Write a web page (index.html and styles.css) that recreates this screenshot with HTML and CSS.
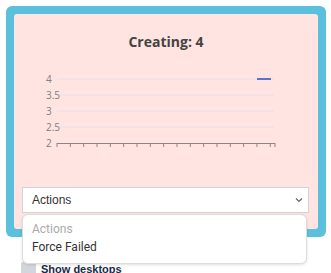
FILE: index.html
```html
<!DOCTYPE html>
<html lang="en">
<head>
    <meta charset="UTF-8">
    <meta name="viewport" content="width=device-width, initial-scale=1.0">
    <title>Creating</title>
    <link rel="stylesheet" href="styles.css">
</head>
<body>
    <div class="card">
        <div class="panel">
            <h2 class="title">Creating: 4</h2>
            <svg class="chart" width="304" height="100" viewBox="0 0 304 100">
                <g class="grid">
                    <line x1="43" y1="27" x2="260" y2="27"/>
                    <line x1="43" y1="43" x2="260" y2="43"/>
                    <line x1="43" y1="59" x2="260" y2="59"/>
                    <line x1="43" y1="75" x2="260" y2="75"/>
                </g>
                <g class="labels">
                    <text x="32" y="31">4</text>
                    <text x="32" y="47">3.5</text>
                    <text x="32" y="63">3</text>
                    <text x="32" y="79">2.5</text>
                    <text x="32" y="95">2</text>
                </g>
                <g class="axis" id="axis">
                    <line x1="43" y1="91.5" x2="261" y2="91.5"/>
                </g>
                <line class="series" x1="243" y1="27" x2="257" y2="27"/>
            </svg>
            <div class="select-wrap">
                <div class="select">
                    <span>Actions</span>
                    <svg width="8" height="6" viewBox="0 0 8 6"><path d="M1 1.5 L4 4.5 L7 1.5" fill="none" stroke="#666" stroke-width="1.2"/></svg>
                </div>
                <div class="menu">
                    <div class="item muted">Actions</div>
                    <div class="item">Force Failed</div>
                </div>
            </div>
        </div>
    </div>
    <label class="check">
        <span class="box"></span>
        <span>Show desktops</span>
    </label>

    <script>
        // x axis ticks
        const axis = document.getElementById('axis');
        const xs = [];
        for (let k = 0; k <= 16; k++) xs.push(43 + k * 13.33);
        xs.push(261);
        xs.forEach(function(x) {
            const t = document.createElementNS('http://www.w3.org/2000/svg', 'line');
            t.setAttribute('x1', x);
            t.setAttribute('x2', x);
            t.setAttribute('y1', 91);
            t.setAttribute('y2', 95);
            axis.appendChild(t);
        });
    </script>
</body>
</html>
```

FILE: styles.css
```css
body {
    margin: 0;
    padding: 6px;
    font-family: "Open Sans", sans-serif;
}
.card {
    width: 304px;
    background: #5bc0dc;
    padding: 8px;
    border-radius: 6px;
}
.panel {
    background: #ffe4e1;
    border-radius: 3px;
    padding: 18px 0 16px;
}
.title {
    margin: 0;
    text-align: center;
    font-size: 14px;
    line-height: 20px;
    font-weight: 700;
    color: #444;
}
.chart {
    display: block;
    margin-top: 0;
}
.grid line {
    stroke: #e6e0ee;
    stroke-width: 1;
}
.labels text {
    font-family: "Open Sans", sans-serif;
    font-size: 10px;
    fill: #808080;
}
.axis line {
    stroke: #888;
    stroke-width: 1;
}
.series {
    stroke: #5b72cc;
    stroke-width: 2;
}
.select-wrap {
    position: relative;
    margin: 35px 9px 0 8px;
}
.select {
    display: flex;
    align-items: center;
    justify-content: space-between;
    height: 24px;
    padding: 0 5px 0 9px;
    background: #fff;
    border: 1px solid #d4d4d4;
    font-family: "Liberation Sans", Arial, sans-serif;
    font-size: 12px;
    color: #333;
}
.menu {
    position: absolute;
    top: 27px;
    left: 0;
    width: 283px;
    padding: 5px 0 7px;
    background: #fff;
    border: 1px solid #ddd;
    border-radius: 6px;
    box-shadow: 0 1px 3px rgba(0, 0, 0, 0.12);
    font-family: Roboto, sans-serif;
    font-size: 12px;
}
.item {
    line-height: 18px;
    padding: 0 9px;
    color: #333;
}
.item.muted {
    color: #aaa;
}
.check {
    display: flex;
    align-items: center;
    gap: 5px;
    margin: 25px 0 0 15px;
    font-family: "Liberation Sans", Arial, sans-serif;
    font-size: 11px;
    font-weight: 700;
    color: #1c2a48;
}
.box {
    width: 15px;
    height: 14px;
    background: #d3d7db;
    border-radius: 2px;
}
```
